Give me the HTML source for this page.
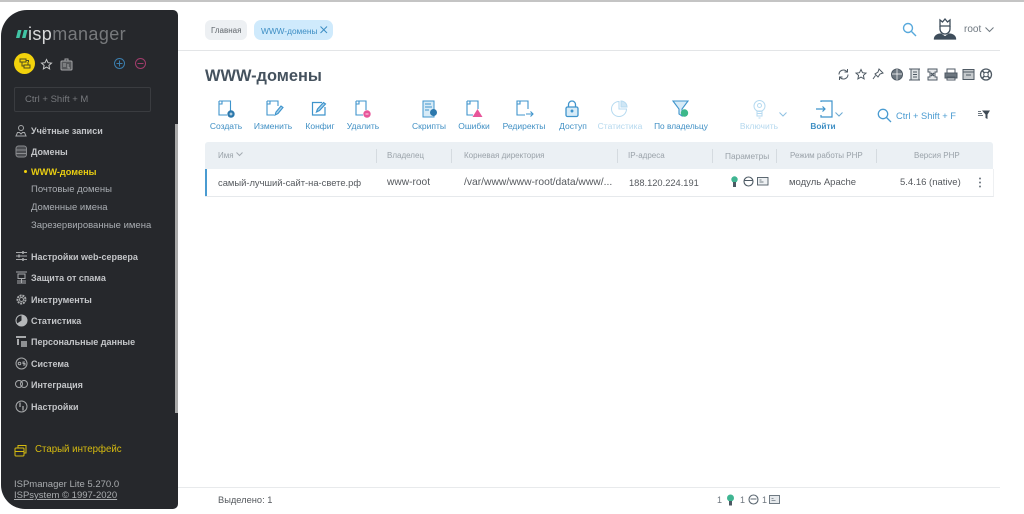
<!DOCTYPE html>
<html lang="ru"><head><meta charset="utf-8"><title>WWW-домены</title>
<style>
html,body{margin:0;padding:0;width:1024px;height:514px;overflow:hidden;background:#fff}
#w{position:relative;width:1024px;height:514px;overflow:hidden;filter:blur(.35px);font-family:"Liberation Sans",sans-serif}
.t{position:absolute;white-space:nowrap;line-height:12px}
.s{font-size:9px;color:#c3c5c8;font-weight:700;left:31px}
.u{font-size:9.500px;color:#a9adb2;left:31px}
.b{font-size:8.500px;color:#3f8fc4;text-align:center;transform:translateX(-50%)}
.h{font-size:8px;color:#9aa2a9}
.c{font-size:9.500px;color:#55595e}
.l{position:absolute;width:1px;height:14px;top:149px;background:#d5dbe0}
svg{position:absolute;overflow:visible;fill:none}
</style></head><body><div id="w">
<div style="position:absolute;left:0;top:0;width:1024px;height:2px;background:#c4c4c4"></div>
<div style="position:absolute;left:178px;top:50px;width:822px;height:1px;background:#e3e5e7"></div>
<div style="position:absolute;left:178px;top:487px;width:822px;height:1px;background:#e8eaec"></div>

<div style="position:absolute;left:1px;top:10px;width:177px;height:499px;background:#26282c;border-radius:26px 5px 5px 24px"></div>
<div style="position:absolute;left:175px;top:124px;width:3px;height:289px;background:#a9a9a9"></div>

<svg style="left:15px;top:29px" width="14" height="10"><path d="M3 1h3.500L4.500 9H1zM9 1h3.500L10.500 9H7z" fill="#41c4a5"/></svg>
<div class="t" style="left:28px;top:23px;font-size:18px;line-height:22px;color:#d8d9da;letter-spacing:.4px">isp<span style="color:#77797c">manager</span></div>

<div style="position:absolute;left:14px;top:53px;width:21px;height:21px;border-radius:50%;background:#f2d20c"></div>
<svg style="left:19px;top:58px" width="12" height="12" stroke="#4b4a20" stroke-width="1"><path d="M1 1h6v3H1zM5 7h6v3H5zM3 4v4h2M9 4v3M7 2.500h2.500V4"/></svg>
<svg style="left:40px;top:58px" width="13" height="13" stroke="#c9cacb" stroke-width="1"><path d="M6.500 1.500l1.500 3.200 3.500.4-2.600 2.300.7 3.500-3.100-1.800-3.100 1.800.7-3.500L1.500 5.100l3.500-.4z"/></svg>
<svg style="left:60px;top:58px" width="13" height="13" stroke="#a4a5a7" stroke-width="1"><rect x="1" y="3" width="11" height="9" rx="1" fill="#55575a"/><path d="M5 3V1h3v2M3 6h3M3 8h3M8 6v4h2"/></svg>
<svg style="left:114px;top:58px" width="12" height="12" stroke="#3b7eae" stroke-width="1"><circle cx="5.500" cy="5.500" r="5"/><path d="M2.500 5.500h6M5.500 2.500v6"/></svg>
<svg style="left:135px;top:58px" width="12" height="12" stroke="#a13c6b" stroke-width="1"><circle cx="5.500" cy="5.500" r="5"/><path d="M2.500 5.500h6"/></svg>

<div style="position:absolute;left:14px;top:87px;width:135px;height:23px;border:1px solid #3a3c40;border-radius:2px"></div>
<div class="t" style="left:25px;top:94px;font-size:9.500px;color:#77797d">Ctrl + Shift + M</div>

<svg style="left:15px;top:124px" width="13" height="13" stroke="#a7a9ab" stroke-width="1"><circle cx="6" cy="4" r="2.500"/><path d="M1 12l1.500-3.500H4.500L6 10l1.500-1.500h2L11 12z"/></svg>
<div class="t s" style="top:125px">Учётные записи</div>
<svg style="left:15px;top:145px" width="13" height="13" stroke="#8a8c8f" stroke-width="1"><rect x="1" y="1" width="10.500" height="11" rx="2.500" fill="#4a4c50"/><path d="M1 5h10.500M1 8.500h10.500"/></svg>
<div class="t s" style="top:146px">Домены</div>
<div style="position:absolute;left:24px;top:170px;width:3px;height:3px;border-radius:50%;background:#f2d20c"></div>
<div class="t" style="left:31px;top:166px;font-size:9.200px;font-weight:700;color:#e8cd12">WWW-домены</div>
<div class="t u" style="top:184px">Почтовые домены</div>
<div class="t u" style="top:202px">Доменные имена</div>
<div class="t u" style="top:220px;font-size:9.500px">Зарезервированные имена</div>

<svg style="left:15px;top:250px" width="13" height="13" stroke="#a7a9ab" stroke-width="1"><path d="M1 2.500h11M1 6h11M1 9.500h11"/><path d="M8 1v3M4 4.500v3M8 8v3" stroke-width="1.500"/></svg>
<div class="t s" style="top:251px">Настройки web-сервера</div>
<svg style="left:15px;top:271px" width="13" height="13" stroke="#a7a9ab" stroke-width="1"><rect x="3" y="3" width="7" height="4.500"/><path d="M1 1h11M6.500 7.500V12M2 10h9M2 12h9"/></svg>
<div class="t s" style="top:272px">Защита от спама</div>
<svg style="left:15px;top:293px" width="13" height="13" stroke="#a7a9ab"><circle cx="6.500" cy="6.500" r="4" stroke-width="2" stroke-dasharray="2 .8"/><circle cx="6.500" cy="6.500" r="2" stroke-width="1"/></svg>
<div class="t s" style="top:294px">Инструменты</div>
<svg style="left:15px;top:314px" width="13" height="13"><circle cx="6.500" cy="6.500" r="5.500" stroke="#b5b7b9" stroke-width="1"/><path d="M6.500 1a5.500 5.500 0 1 1-4.500 8.500l4.500-3z" fill="#b5b7b9"/></svg>
<div class="t s" style="top:315px">Статистика</div>
<svg style="left:15px;top:335px" width="13" height="13"><path d="M1 1h10v2H1zM2 4h2v6H2z" fill="#a7a9ab"/><path d="M6 6h6v6H6z" fill="#8e9093"/></svg>
<div class="t s" style="top:336px">Персональные данные</div>
<svg style="left:15px;top:357px" width="13" height="13" stroke="#a7a9ab" stroke-width="1"><circle cx="6.500" cy="6.500" r="5.500"/><circle cx="4.500" cy="6.500" r="1.300"/><path d="M10 5H8v1.500h2V8H8"/></svg>
<div class="t s" style="top:358px">Система</div>
<svg style="left:15px;top:379px" width="13" height="11" stroke="#a7a9ab" stroke-width="1"><circle cx="4" cy="5" r="3.500"/><circle cx="9" cy="5" r="3.500"/></svg>
<div class="t s" style="top:379px">Интеграция</div>
<svg style="left:15px;top:400px" width="13" height="13" stroke="#a7a9ab" stroke-width="1"><circle cx="6.500" cy="6.500" r="5.500"/><path d="M5 2.500V7M8 6v4.500" stroke-width="1.300"/></svg>
<div class="t s" style="top:401px">Настройки</div>

<svg style="left:14px;top:444px" width="13" height="13" stroke="#d6bb10" stroke-width="1"><rect x="1" y="4" width="9" height="8" rx="1"/><path d="M1 7.500h9M4 4V1.500h8V9h-2"/></svg>
<div class="t" style="left:35px;top:444px;font-size:9.700px;color:#d6bb10">Старый интерфейс</div>
<div class="t" style="left:14px;top:479px;font-size:9.500px;color:#a9acaf">ISPmanager Lite 5.270.0</div>
<div class="t" style="left:14px;top:490px;font-size:9.500px;color:#a9acaf;text-decoration:underline">ISPsystem © 1997-2020</div>

<div style="position:absolute;left:205px;top:20px;width:42px;height:20px;border-radius:6px;background:#edf0f3"></div>
<div class="t" style="left:211px;top:25px;font-size:8px;color:#60666c">Главная</div>
<div style="position:absolute;left:254px;top:20px;width:79px;height:20px;border-radius:7px;background:#cfeafc"></div>
<div class="t" style="left:261px;top:25px;font-size:8.300px;color:#3d8ec4">WWW-домены</div>
<svg style="left:320px;top:26px" width="8" height="8" stroke="#3d8ec4" stroke-width="1"><path d="M.5.500l6.500 6.500M7 .5L.5 7"/></svg>

<svg style="left:902px;top:22px" width="15" height="15" stroke="#58a9dc" stroke-width="1.400"><circle cx="6" cy="6" r="4.500"/><path d="M9.500 9.500l4.500 4.500"/></svg>
<svg style="left:933px;top:18px" width="24" height="22" stroke="#3e4d5b" stroke-width="1.300"><path d="M7 8V2l2.500 2L12 1l2.500 3L17 2v6z"/><path d="M7 8v3c0 3 2.500 5 5 5s5-2 5-5V8"/><path d="M1.500 21c0-3 3-5 6.500-5l4 3 4-3c3.500 0 6.500 2 6.500 5z" fill="#3e4d5b"/></svg>
<div class="t" style="left:964px;top:24px;font-size:10px;color:#6f7880">root</div>
<svg style="left:985px;top:27px" width="9" height="6" stroke="#6f7880"><path d="M.5.500l4 4 4-4"/></svg>

<div class="t" style="left:205px;top:66px;font-size:16.400px;line-height:20px;font-weight:700;color:#45525e">WWW-домены</div>

<svg style="left:837px;top:68px" width="160" height="13" stroke="#4f5a64" stroke-width="1">
<path d="M2 6.500a4.500 4.500 0 0 1 8-2.800M11 6.500a4.500 4.500 0 0 1-8 2.800M10.500 1v3h-3M2.500 12V9h3"/>
<path d="M24 1.500l1.500 3.200 3.500.4-2.600 2.300.7 3.500-3.100-1.800-3.100 1.800.7-3.500L19 5.100l3.500-.4z"/>
<path d="M42 1l4 4-3 1-2 3-3-3 3-2zM38.500 7.500L36 11"/>
<circle cx="60" cy="6.500" r="5.500" fill="#6d7780"/><path d="M55 6h10M60 1v11" stroke="#fff" stroke-width=".7"/>
<rect x="74" y="1" width="8" height="11" fill="#dfe2e5"/><path d="M72 1h11M72 12h11M76 4h4M76 6.500h4M76 9h4"/>
<path d="M91 1h9v3h-2v5h2v3h-9V9h2V4h-2z" fill="#e6e8ea"/><path d="M94 5l3 3M97 5l-3 3" stroke-width="1.300"/>
<rect x="108" y="5" width="12" height="5" fill="#6d7780"/><path d="M110 5V1h8v4M110 9h8v3h-8z"/>
<rect x="126" y="1.500" width="11" height="10" fill="#c6cacd"/><path d="M126 4h11M129 7h5" />
<circle cx="149" cy="6.500" r="5.500" stroke-width="1.300"/><circle cx="149" cy="6.500" r="2.300"/><path d="M145 2.500l2.300 2.300M153 2.500l-2.300 2.300M145 10.500l2.300-2.300M153 10.500l-2.300-2.300" stroke-width="1.500"/>
</svg>

<!-- toolbar -->
<svg style="left:218px;top:100px" width="18" height="20" stroke="#3f94cc" stroke-width="1.100"><path d="M1 1h11.500v10M1 1v14h8"/><path d="M4 1v3H1"/><circle cx="13" cy="14" r="3.700" fill="#2c78ac" stroke="none"/><path d="M11.500 14h3M13 12.500v3" stroke="#fff" stroke-width=".8"/></svg>
<div class="t b" style="left:226px;top:120px">Создать</div>
<svg style="left:266px;top:100px" width="18" height="20" stroke="#3f94cc" stroke-width="1.100"><path d="M1 1h11v5M1 1v14h7"/><path d="M4 1v3H1"/><path d="M9 15l1-3 5-6 2 1.500-5 6z" fill="#a8d2ec"/></svg>
<div class="t b" style="left:273px;top:120px">Изменить</div>
<svg style="left:311px;top:100px" width="18" height="18" stroke="#3f94cc" stroke-width="1.200"><path d="M14 7v8H1.500V2.500H11"/><path d="M5.500 12l1-3 6-6.500 2 1.500-6 6.500z" fill="#a8d2ec"/></svg>
<div class="t b" style="left:320px;top:120px">Конфиг</div>
<svg style="left:355px;top:100px" width="18" height="20" stroke="#3f94cc" stroke-width="1.100"><path d="M1 1h10v9M1 1v14h7"/><path d="M4 1v3H1"/><circle cx="12" cy="14" r="3.700" fill="#e8559a" stroke="none"/><path d="M10.500 14h3" stroke="#fff" stroke-width=".8"/></svg>
<div class="t b" style="left:363px;top:120px">Удалить</div>
<svg style="left:422px;top:100px" width="16" height="19" stroke="#3f94cc" stroke-width="1"><path d="M1 1h11v16H1z" fill="#d7ebf7"/><path d="M3 4h6M3 7h7M3 10h4"/><circle cx="11.500" cy="12.500" r="3.500" fill="#2c78ac" stroke="none"/></svg>
<div class="t b" style="left:429px;top:120px">Скрипты</div>
<svg style="left:466px;top:100px" width="18" height="19" stroke="#3f94cc" stroke-width="1.100"><path d="M1 1h11v8M1 1v14h6"/><path d="M4 1v3H1"/><path d="M11.500 9l5 8h-10z" fill="#e8559a" stroke="none"/></svg>
<div class="t b" style="left:474px;top:120px">Ошибки</div>
<svg style="left:516px;top:100px" width="18" height="18" stroke="#3f94cc" stroke-width="1.100"><path d="M12 9V1H1v14h8"/><path d="M4 1v3H1M10 14h7M14.500 11.500L17 14l-2.500 2.500"/></svg>
<div class="t b" style="left:524px;top:120px">Редиректы</div>
<svg style="left:565px;top:100px" width="15" height="18" stroke="#3f94cc" stroke-width="1.300"><rect x="1" y="7" width="12" height="9.500" rx="1.500" fill="#d7ebf7"/><path d="M3.500 7V4.500a3.500 3.500 0 0 1 7 0V7"/><circle cx="7" cy="11" r=".8" fill="#2c78ac"/></svg>
<div class="t b" style="left:573px;top:120px">Доступ</div>
<svg style="left:611px;top:100px" width="18" height="18" stroke="#b6daf0" stroke-width="1"><path d="M8 1.500a7.500 7.500 0 1 0 7.500 7.500H8z"/><path d="M10 1v6h6a6 6 0 0 0-6-6z" fill="#cfe6f5"/></svg>
<div class="t b" style="left:620px;top:120px;color:#b5d8ee">Статистика</div>
<svg style="left:672px;top:100px" width="18" height="19" stroke="#3f94cc" stroke-width="1.100"><path d="M1 1h15l-6 8v7l-3-2V9z" fill="#d7ebf7"/><circle cx="12.500" cy="13" r="3.700" fill="#3cb88a" stroke="none"/></svg>
<div class="t b" style="left:681px;top:120px;font-size:8.300px">По владельцу</div>
<svg style="left:753px;top:100px" width="14" height="19" stroke="#b6daf0" stroke-width="1"><circle cx="6.500" cy="6" r="5.500"/><circle cx="6.500" cy="5.500" r="2"/><path d="M4 11h5v5H4zM4 13.500h5M5.500 18h2"/></svg>
<svg style="left:779px;top:112px" width="8" height="5" stroke="#8fc1e2"><path d="M.5.500l3.500 3.500 3.500-3.500"/></svg>
<div class="t b" style="left:759px;top:120px;color:#b5d8ee">Включить</div>
<svg style="left:815px;top:100px" width="20" height="18" stroke="#3f94cc" stroke-width="1.200"><path d="M6 2V1h11v16H6v-2M1 9h9M7.500 6.500L10 9l-2.500 2.500"/></svg>
<svg style="left:835px;top:112px" width="8" height="5" stroke="#6aa9d2"><path d="M.5.500l3.500 3.500 3.500-3.500"/></svg>
<div class="t b" style="left:823px;top:120px;font-weight:700;font-size:8.300px">Войти</div>
<svg style="left:877px;top:108px" width="15" height="15" stroke="#4a9bd1" stroke-width="1.300"><circle cx="6" cy="6" r="4.700"/><path d="M9.500 9.500l4.500 4.500"/></svg>
<div class="t" style="left:896px;top:110px;font-size:9.300px;color:#4a9bd1">Ctrl + Shift + F</div>
<svg style="left:978px;top:110px" width="12" height="10"><path d="M4 .5h8L9.500 4.500v4.500L7.500 8V4.500z" fill="#3f4a55"/><path d="M0 1.500h3M0 3.500h4M0 5.500h5" stroke="#6d7780"/></svg>

<!-- table -->
<div style="position:absolute;left:205px;top:142px;width:788px;height:27px;background:#ebf0f4;border-radius:3px 3px 0 0"></div>
<div style="position:absolute;left:205px;top:169px;width:788px;height:27px;background:#fff;border-bottom:1px solid #e6e9ec;border-right:1px solid #eef0f2"></div>
<div style="position:absolute;left:205px;top:169px;width:2px;height:27px;background:#4a9bd1"></div>
<div class="t h" style="left:218px;top:150px">Имя</div>
<svg style="left:236px;top:152px" width="7" height="5" stroke="#a4abb1"><path d="M.5.500l3 3 3-3"/></svg>
<div class="l" style="left:376px"></div><div class="l" style="left:451px"></div><div class="l" style="left:617px"></div><div class="l" style="left:712px"></div><div class="l" style="left:776px"></div><div class="l" style="left:876px"></div>
<div class="t h" style="left:387px;top:150px">Владелец</div>
<div class="t h" style="left:464px;top:150px">Корневая директория</div>
<div class="t h" style="left:628px;top:150px">IP-адреса</div>
<div class="t h" style="left:725px;top:150px;font-size:8.300px">Параметры</div>
<div class="t h" style="left:790px;top:150px">Режим работы PHP</div>
<div class="t h" style="left:914px;top:150px">Версия PHP</div>

<div class="t c" style="left:218px;top:177px;font-size:9.400px">самый-лучший-сайт-на-свете.рф</div>
<div class="t c" style="left:387px;top:177px;font-size:10.200px">www-root</div>
<div class="t c" style="left:464px;top:177px;font-size:10.300px">/var/www/www-root/data/www/...</div>
<div class="t c" style="left:629px;top:177px;font-size:9.300px">188.120.224.191</div>
<svg style="left:731px;top:176px" width="40" height="12"><circle cx="3.500" cy="3.500" r="3.200" fill="#3fb592"/><rect x="2" y="6" width="3" height="5" fill="#4c5963"/><circle cx="17.500" cy="5.500" r="4.500" stroke="#4c5963" stroke-width="1.100"/><path d="M13.500 4.500h8" stroke="#4c5963"/><rect x="26.500" y="1.500" width="10.500" height="7.500" stroke="#4c5963" stroke-width=".9" fill="#eef1f3"/><path d="M28.500 4h2M28.500 6h4" stroke="#4c5963" stroke-width=".7"/></svg>
<div class="t c" style="left:789px;top:177px">модуль Apache</div>
<div class="t c" style="left:900px;top:177px">5.4.16 (native)</div>
<svg style="left:978px;top:177px" width="4" height="11"><circle cx="2" cy="1.500" r="1" fill="#6d7780"/><circle cx="2" cy="5.500" r="1" fill="#6d7780"/><circle cx="2" cy="9.500" r="1" fill="#6d7780"/></svg>

<div class="t" style="left:218px;top:494px;font-size:9.300px;color:#55595e">Выделено: 1</div>
<div class="t" style="left:717px;top:494px;font-size:9px;color:#6f7880">1</div>
<svg style="left:726px;top:494px" width="12" height="13"><circle cx="4.500" cy="4" r="3.500" fill="#3fb592"/><rect x="3" y="7" width="3" height="4.500" fill="#4c5963"/></svg>
<div class="t" style="left:740px;top:494px;font-size:9px;color:#6f7880">1</div>
<svg style="left:748px;top:494px" width="12" height="12"><circle cx="5.500" cy="5.500" r="4.500" stroke="#5a6670" stroke-width="1.100"/><path d="M2.500 5h6" stroke="#5a6670"/></svg>
<div class="t" style="left:762px;top:494px;font-size:9px;color:#6f7880">1</div>
<svg style="left:769px;top:495px" width="12" height="10"><rect x=".5" y=".5" width="10" height="8" stroke="#6f7a83" fill="#e6e9ec"/><path d="M2.500 3.500h2M2.500 5.500h4" stroke="#6f7a83" stroke-width=".7"/></svg>
</div></body></html>
